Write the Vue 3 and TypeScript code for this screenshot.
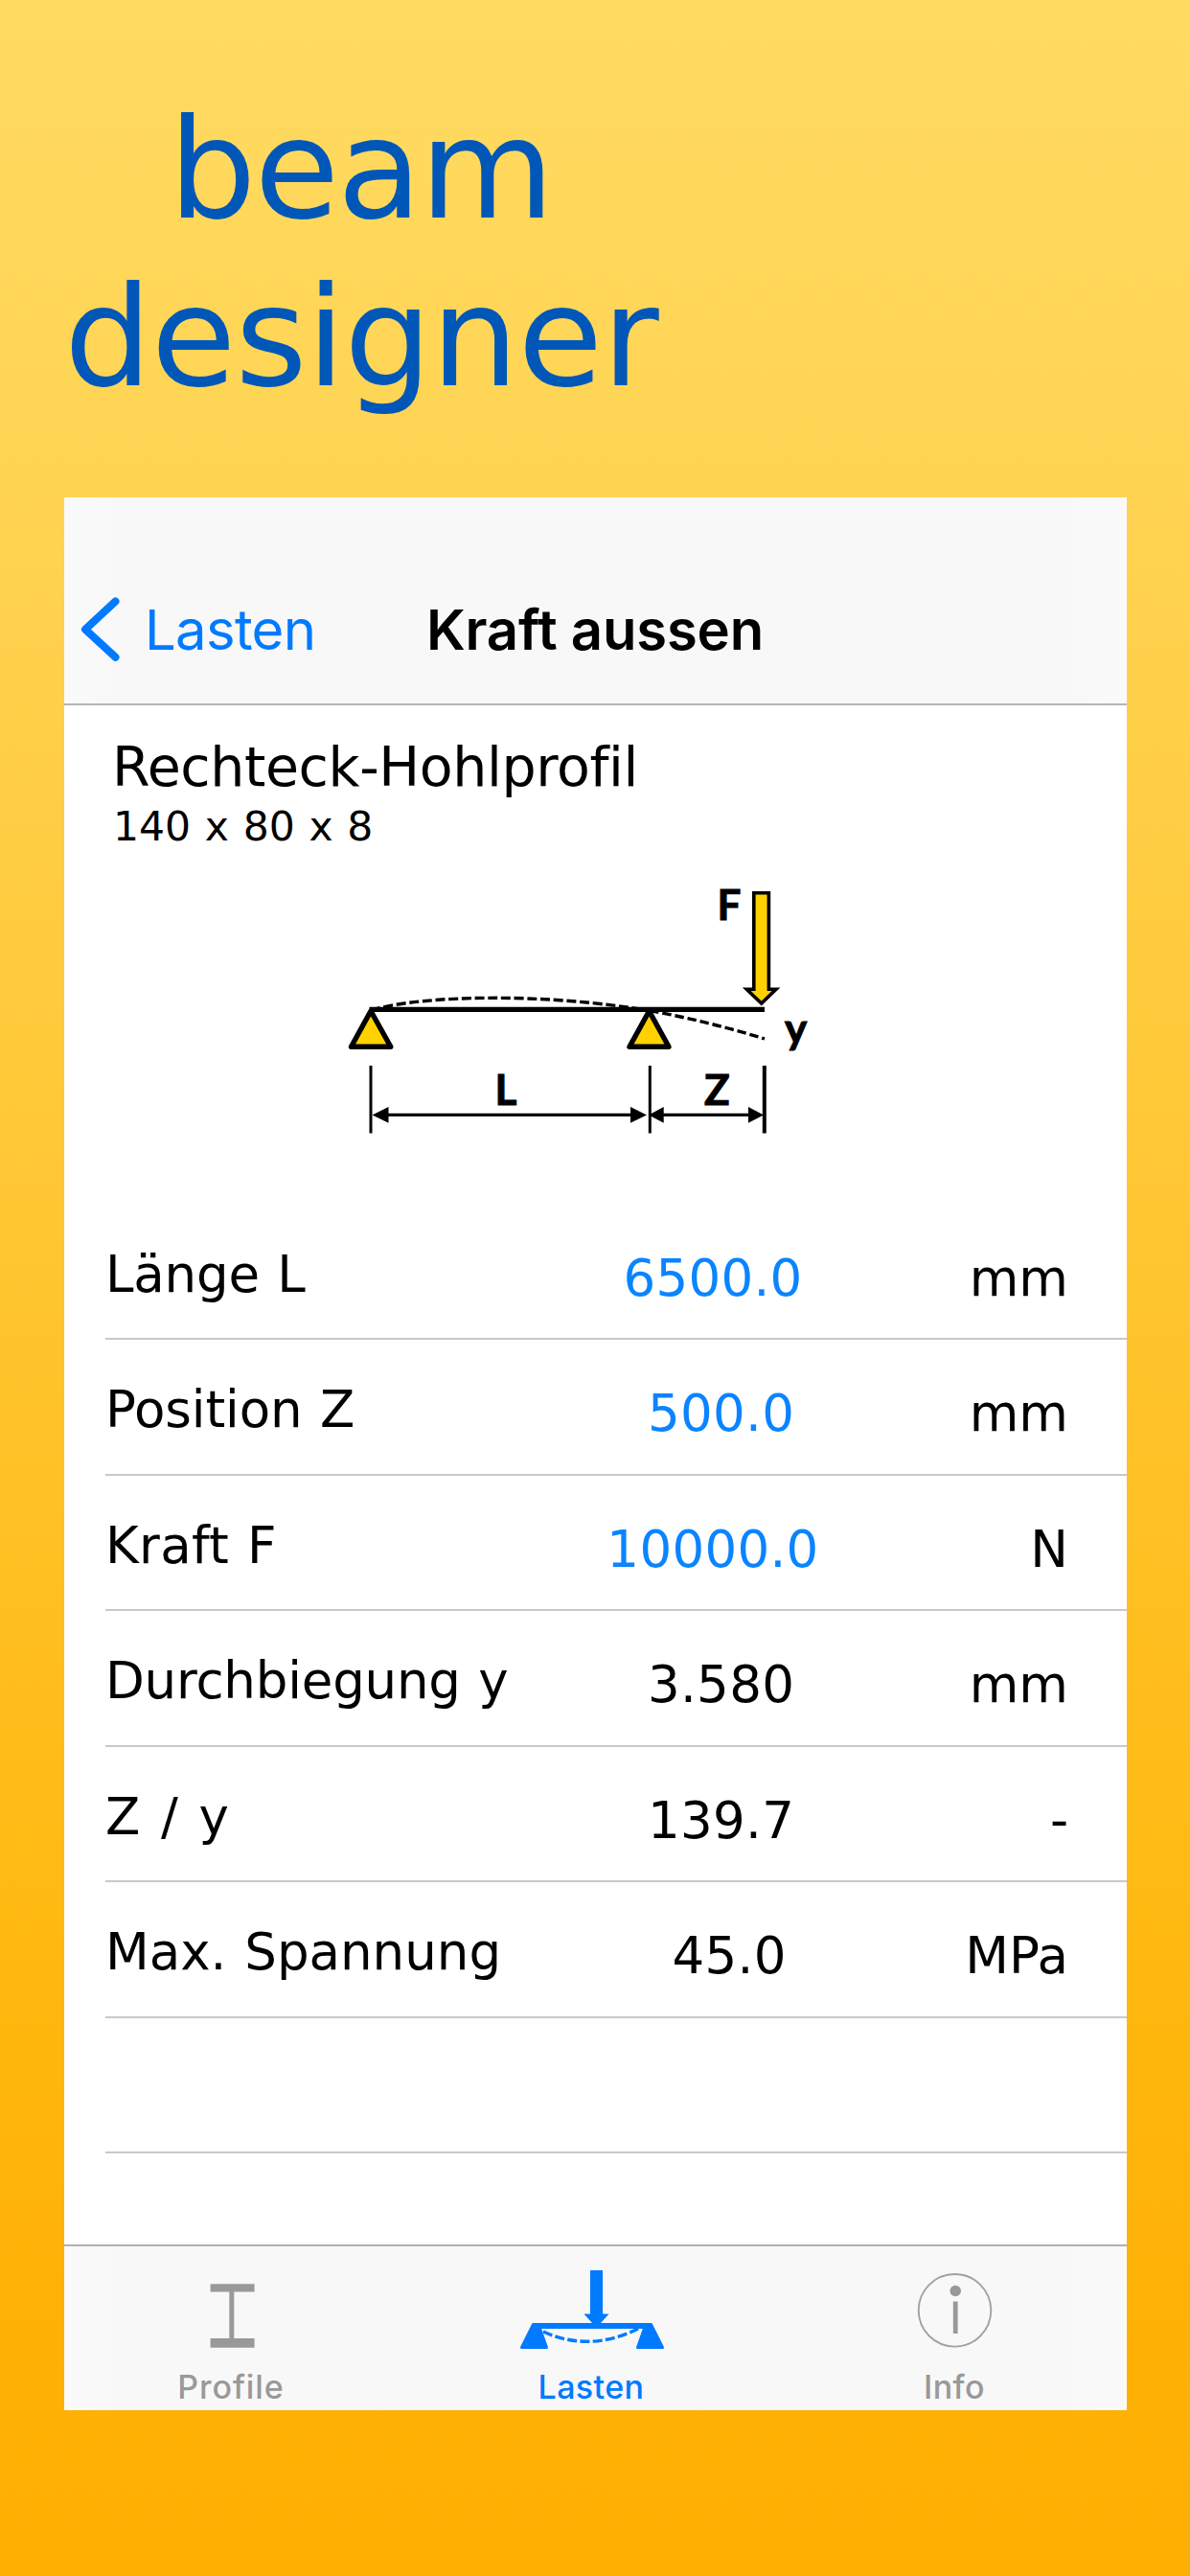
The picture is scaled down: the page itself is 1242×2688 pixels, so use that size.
<script setup lang="ts">
interface Row {
  label: string
  value: string
  unit: string
  editable?: boolean
  spacing: string
  gap: string
}

const rows: Row[] = [
  { label: 'Länge L', value: '6500.0', unit: 'mm', editable: true, spacing: '-0.2px', gap: '1.8px' },
  { label: 'Position Z', value: '500.0', unit: 'mm', editable: true, spacing: '-0.1px', gap: '1.8px' },
  { label: 'Kraft F', value: '10000.0', unit: 'N', editable: true, spacing: '0.3px', gap: '1.8px' },
  { label: 'Durchbiegung y', value: '3.580', unit: 'mm', spacing: '-0.2px', gap: '1.8px' },
  { label: 'Z / y', value: '139.7', unit: '-', spacing: '0px', gap: '4.8px' },
  { label: 'Max. Spannung', value: '45.0', unit: 'MPa', spacing: '0px', gap: '2px' },
]
</script>

<template>
  <main class="page">
    <h1 class="title">
      <span class="line-one">beam</span>
      <span class="line-two">designer</span>
    </h1>
    <section class="phone">
      <header class="nav">
        <div class="back">
          <svg class="chevron" width="46" height="76" viewBox="0 0 46 76">
            <path d="M40.5 8.5 L9 37.700 L40.500 66.700" fill="none" stroke="#007aff" stroke-width="8" stroke-linecap="round" stroke-linejoin="round" />
          </svg>
          <span class="back-label">Lasten</span>
        </div>
        <div class="nav-title">Kraft aussen</div>
      </header>

      <div class="profile-name">Rechteck-Hohlprofil</div>
      <div class="profile-size">140 x 80 x 8</div>

      <svg class="diagram" width="1109" height="367.5" viewBox="67 889 1109 367.5">
        <g fill="none" stroke="#000" stroke-width="3.4">
          <path d="M387 1054 C445 1038 565 1036 678 1054.500" stroke-dasharray="10 3.7" />
          <path d="M678 1054.500 Q740 1066 798 1084" stroke-dasharray="9.500 3.900" />
        </g>
        <g fill="#ffd100" stroke="#000" stroke-width="5.400" stroke-linejoin="round">
          <path d="M387 1055 L366.500 1092.300 H407.800 Z" />
          <path d="M677.500 1055 L657 1092.300 H698 Z" />
        </g>
        <path d="M385.500 1053.400 H798" stroke="#000" stroke-width="5.200" />
        <path d="M786.800 931.700 H802.400 V1032.300 H810 L794.700 1047 L779.300 1032.300 H786.800 Z" fill="#ffd100" stroke="#000" stroke-width="3.600" />
        <g stroke="#000" stroke-width="3">
          <path d="M387 1112 V1182.500 M678.300 1112 V1182.500" />
          <path d="M797.800 1112 V1182.500" stroke-width="4" />
          <path d="M400 1163.400 H664 M690 1163.400 H786" stroke-width="3.200" />
        </g>
        <path d="M388.500 1163.400 L405.500 1155 V1171.800 Z M675 1163.400 L658 1155 V1171.800 Z M677 1163.400 L692.700 1155 V1171.800 Z M797 1163.400 L781 1155 V1171.800 Z" />
        <g class="marks">
          <text x="748.500" y="960.300">F</text>
          <text x="516.500" y="1153">L</text>
          <text x="735" y="1153">Z</text>
          <text x="819" y="1088.800">y</text>
        </g>
      </svg>

      <div v-for="row in rows" :key="row.label" class="row">
        <span class="label" :style="{ letterSpacing: row.spacing, wordSpacing: row.gap }">{{ row.label }}</span>
        <span class="value" :class="{ editable: row.editable }">{{ row.value.padStart(6) }}</span>
        <span class="unit">{{ row.unit }}</span>
      </div>
      <div class="row"></div>

      <nav class="tabs">
        <div class="tab">
          <svg width="160" height="120" viewBox="0 0 160 120">
            <path d="M58.600 39.200 H104.600 V47.500 H83.300 V96 H104.600 V105.700 H58.600 V96 H78.300 V47.500 H58.600 Z" fill="#999" />
          </svg>
          <span class="wide">Profile</span>
        </div>
        <div class="tab active">
          <svg width="160" height="120" viewBox="0 0 160 120">
            <g fill="#007aff">
              <path d="M79 25 H92 V70.500 H98.500 L90 80 H81 L72.500 70.500 H79 Z" />
              <path d="M19 80 H143 V86 H19 Z" />
              <g stroke="#007aff" stroke-width="3" stroke-linejoin="round">
                <path d="M19.500 81.500 H25 L33.500 105.500 H7.500 Z" />
                <path d="M142.500 81.500 H137 L128.500 105.500 H154.500 Z" />
              </g>
            </g>
            <path d="M30 89 Q78 111 129 86" fill="none" stroke="#007aff" stroke-width="3.400" stroke-dasharray="10 3.300" />
          </svg>
          <span>Lasten</span>
        </div>
        <div class="tab">
          <svg width="160" height="120" viewBox="0 0 160 120">
            <circle cx="80.500" cy="66.800" r="37.800" fill="none" stroke="#a2a2a2" stroke-width="1.900" />
            <circle cx="81.200" cy="46.500" r="5.800" fill="#999" />
            <path d="M81.200 57.500 V91" stroke="#999" stroke-width="4.800" />
          </svg>
          <span>Info</span>
        </div>
      </nav>
    </section>
  </main>
</template>

<style>
body {
  margin: 0;
}
</style>

<style scoped>
.page {
  box-sizing: border-box;
  width: 1242px;
  height: 2688px;
  padding: 90px 66px 0 67px;
  overflow: hidden;
  background: linear-gradient(180deg, #ffdb62 0%, #ffd351 20%, #ffc52f 50%, #ffb911 75%, #ffb105 90%, #ffaf02 100%);
  font-family: "DejaVu Sans", Verdana, sans-serif;
  color: #000;
}
.title {
  display: flex;
  flex-direction: column;
  margin: 0 0 79px;
  font-size: 144px;
  line-height: 175px;
  font-weight: 400;
  color: #0057b8;
}
.line-one {
  margin-left: 109px;
  letter-spacing: -2px;
}
.line-two {
  letter-spacing: -0.7px;
}
.phone {
  display: flex;
  flex-direction: column;
  width: 1109px;
  height: 1996px;
  background: #fff;
}
.nav {
  box-sizing: border-box;
  display: grid;
  grid-template-columns: 378px 1fr;
  height: 217px;
  padding-top: 100px;
  border-bottom: 2px solid #b4b4b4;
  background: linear-gradient(90deg, #fafafa 0, #f8f8f8 60px, #f8f8f8 1040px, #fafafa 100%);
  font-family: Inter, sans-serif;
  font-size: 58px;
  line-height: 60px;
}
.back {
  display: flex;
  align-items: flex-start;
  color: #007aff;
}
.chevron {
  margin: 0 0 0 13px;
}
.back-label {
  margin: 8px 0 0 25px;
  letter-spacing: -0.7px;
}
.nav-title {
  margin-top: 8px;
  font-weight: 600;
  letter-spacing: -0.2px;
}
.profile-name {
  margin: 34px 0 0 50px;
  font-size: 57px;
  line-height: 60px;
  letter-spacing: -0.4px;
}
.profile-size {
  margin: 7px 0 0 51px;
  font-size: 42.5px;
  line-height: 52px;
  word-spacing: 1.2px;
}
.diagram {
  display: block;
  flex: none;
}
.marks {
  font-family: Lato, sans-serif;
  font-size: 44px;
  font-weight: 700;
  stroke: #000;
  stroke-width: 1;
}
.row {
  box-sizing: border-box;
  display: grid;
  grid-template-columns: 400px 468px 1fr;
  flex: none;
  height: 141.5px;
  margin-left: 43px;
  padding: 43px 61px 0 0;
  border-bottom: 2px solid #c9c9c9;
  font-size: 53px;
  line-height: 60px;
}
.label {
  white-space: nowrap;
}
.value {
  margin-top: 4px;
  text-align: center;
  white-space: pre;
  letter-spacing: 0.3px;
}
.editable {
  color: #0a84ff;
}
.unit {
  margin-top: 4px;
  text-align: right;
}
.tabs {
  box-sizing: border-box;
  display: grid;
  grid-template-columns: 348px 404px 354px;
  height: 173px;
  margin-top: auto;
  border-top: 2px solid #b0b0b0;
  background: linear-gradient(90deg, #fafafa 0, #f8f8f8 60px, #f8f8f8 1040px, #fafafa 100%);
}
.tab {
  display: flex;
  flex-direction: column;
  align-items: center;
  gap: 7px;
  font-family: Inter, sans-serif;
  font-size: 34px;
  line-height: 40px;
  font-weight: 500;
  letter-spacing: 0.4px;
  color: #999;
}
.wide {
  letter-spacing: 0.9px;
}
.active {
  color: #007aff;
}
</style>
